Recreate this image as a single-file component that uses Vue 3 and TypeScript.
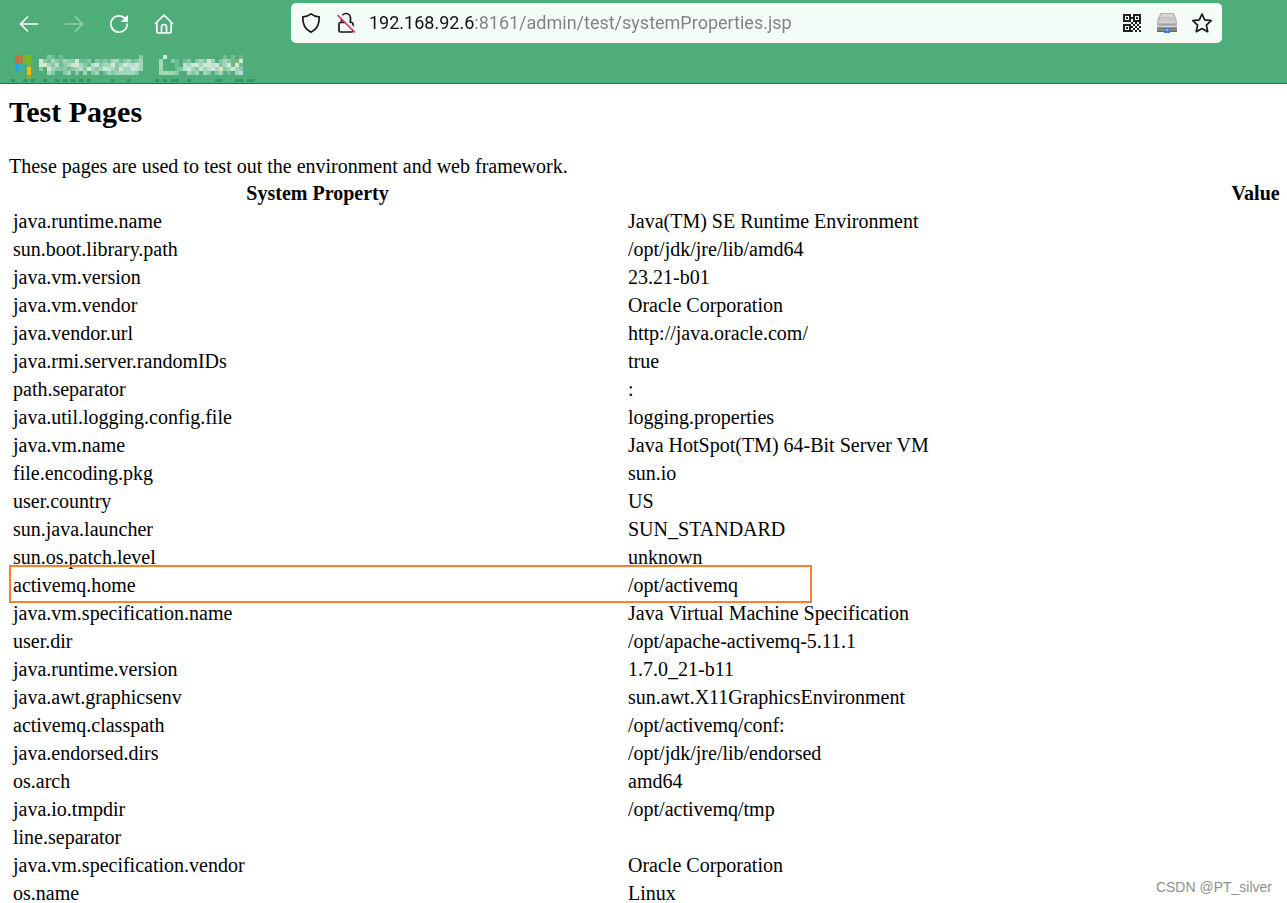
<script setup lang="ts">
interface Property {
  name: string
  value: string
  marked?: boolean
}

interface Cell {
  x: number
  y: number
  fill: string
}

const address = '192.168.92.6:8161/admin/test/systemProperties.jsp'

const properties: Property[] = [
  { name: 'java.runtime.name', value: 'Java(TM) SE Runtime Environment' },
  { name: 'sun.boot.library.path', value: '/opt/jdk/jre/lib/amd64' },
  { name: 'java.vm.version', value: '23.21-b01' },
  { name: 'java.vm.vendor', value: 'Oracle Corporation' },
  { name: 'java.vendor.url', value: 'http://java.oracle.com/' },
  { name: 'java.rmi.server.randomIDs', value: 'true' },
  { name: 'path.separator', value: ':' },
  { name: 'java.util.logging.config.file', value: 'logging.properties' },
  { name: 'java.vm.name', value: 'Java HotSpot(TM) 64-Bit Server VM' },
  { name: 'file.encoding.pkg', value: 'sun.io' },
  { name: 'user.country', value: 'US' },
  { name: 'sun.java.launcher', value: 'SUN_STANDARD' },
  { name: 'sun.os.patch.level', value: 'unknown' },
  { name: 'activemq.home', value: '/opt/activemq', marked: true },
  { name: 'java.vm.specification.name', value: 'Java Virtual Machine Specification' },
  { name: 'user.dir', value: '/opt/apache-activemq-5.11.1' },
  { name: 'java.runtime.version', value: '1.7.0_21-b11' },
  { name: 'java.awt.graphicsenv', value: 'sun.awt.X11GraphicsEnvironment' },
  { name: 'activemq.classpath', value: '/opt/activemq/conf:' },
  { name: 'java.endorsed.dirs', value: '/opt/jdk/jre/lib/endorsed' },
  { name: 'os.arch', value: 'amd64' },
  { name: 'java.io.tmpdir', value: '/opt/activemq/tmp' },
  { name: 'line.separator', value: '' },
  { name: 'java.vm.specification.vendor', value: 'Oracle Corporation' },
  { name: 'os.name', value: 'Linux' },
]

const palette: Record<string, string> = {
  r: '#cc6a3c', n: '#9a8547', g: '#7cb913', h: '#70b33f', u: '#1ba8dc', t: '#4aac9a',
  y: '#f4bd0c', o: '#7bae4c', a: '#6fbd92', b: '#a3d6b9', c: '#cfe9d8', d: '#b4e0dd',
  e: '#88c8a4', f: '#74b87d', s: '#dce6c4', k: '#339963',
}

function toCells(rows: string[], column: number): Cell[] {
  return rows.flatMap((row, y) =>
    [...row].flatMap((key, x) =>
      key === '.' ? [] : [{ x: (x + column) * 4, y: y * 4, fill: palette[key] }],
    ),
  )
}

const logo = toCells(['rngg', 'rnhg', 'ut.o', 'ut.y', '...y', '...o'], 1)
const firstLabel = toCells(
  [
    '..ea.a...................e',
    'ceabeabeecaae.eaeabbaebaeb',
    'csbedaebcsbeadcebbcebcddcb',
    'e.cbeeeaebdecbebcdbecbbcdb',
    '..be..eb.e.b.eb.abebbbbbe.',
  ],
  7,
)
const secondLabel = toCells(
  [
    '.c..............a.a.f.',
    'b..ea.ae.ebecb.ebeffc.',
    'b...a.dbccbcsdcebcfca.',
    'b...aedcbecbdcbsebcbe.',
    'bbbbe..beb.be.eb.a.bd.',
  ],
  37,
)
const edge = [0, 3, 5, 8, 11, 13, 15, 17, 19, 25, 29, 36, 38, 40, 41, 44, 51, 52, 56, 57, 59, 60].map(
  (x) => ({ x: x * 4, y: 24, fill: palette.k }),
)
const mosaic: Cell[] = [...logo, ...firstLabel, ...secondLabel, ...edge]
</script>

<template>
  <div class="window">
    <header class="chrome">
      <div class="toolbar">
        <nav class="navigation">
          <button type="button" aria-label="Back">
            <svg width="20" height="20" viewBox="0 0 20 20">
              <path d="M18.500 10H1.500M8.500 3 1.500 10l7 7" />
            </svg>
          </button>
          <button type="button" aria-label="Forward" disabled>
            <svg width="20" height="20" viewBox="0 0 20 20">
              <path d="M1.500 10h17M11.500 3l7 7-7 7" />
            </svg>
          </button>
          <button type="button" aria-label="Reload">
            <svg width="20" height="20" viewBox="0 0 20 20">
              <path d="M16.500 5A8.200 8.200 0 1 0 18.200 10" />
              <path class="solid" d="M18.500 2v5.500h-5.500z" />
            </svg>
          </button>
          <button type="button" aria-label="Home">
            <svg width="20" height="20" viewBox="0 0 20 20">
              <path d="M1.500 9.500 10 1l8.500 8.500M2.800 8.500v9q0 1.500 1.500 1.500h11.400q1.500 0 1.500-1.500v-9M7.500 18.500V13a2.500 2.500 0 0 1 5 0v5.500" />
            </svg>
          </button>
        </nav>
        <div class="address">
          <button type="button" aria-label="Tracking protection">
            <svg width="20" height="22" viewBox="0 0 20 22">
              <path d="M10 1.800C7.500 3.800 5 4.600 1.800 4.800 1.500 12 4 17.500 10 20.200 16 17.500 18.500 12 18.200 4.800 15 4.600 12.500 3.800 10 1.800Z" />
            </svg>
          </button>
          <button type="button" aria-label="Connection is not secure">
            <svg width="20" height="22" viewBox="0 0 20 22">
              <path d="M5.500 10.500V6a4.500 4.500 0 0 1 9 0v4.500M4.500 10.500h11q1.500 0 1.500 1.500v6.500q0 1.500-1.500 1.500h-11Q3 20 3 18.500V12q0-1.500 1.500-1.500Z" />
              <path class="halo" d="M3.500 2.500 19.500 18.500" />
              <path class="slash" d="M2 3.500 18.500 20" />
            </svg>
          </button>
          <input class="url" type="text" aria-label="Address" :value="address" spellcheck="false" />
          <button type="button" aria-label="QR code">
            <svg class="qr" width="18" height="18" viewBox="0 0 18 18" shape-rendering="crispEdges">
              <path d="M0 0h8v8H0zM2 2v4h4V2zM10 0h8v8h-8zM12 2v4h4V2zM0 10h8v8H0zM2 12v4h4v-4z" />
              <path d="M3 3h2v2H3zM13 3h2v2h-2zM3 13h2v2H3zM8 3h2v2H8zM8 8h2v2H8zM12 8h2v2h-2zM16 8h2v2h-2zM10 10h2v2h-2zM14 10h2v2h-2zM8 12h2v2H8zM12 12h2v2h-2zM16 12h2v2h-2zM10 14h2v2h-2zM14 14h2v2h-2zM8 16h2v2H8zM12 16h2v2h-2zM16 16h2v2h-2z" />
            </svg>
          </button>
          <button type="button" aria-label="Proxy">
            <svg class="drive" width="20" height="20" viewBox="0 0 20 20">
              <path fill="#b5b5b5" d="M4 0h12q1 0 1.300 1L20 8v4.500q0 1-1 1H1q-1 0-1-1V8l2.700-7Q3 0 4 0z" />
              <path fill="#d6d6d6" d="M4.500 1h11L18 7.500H2z" />
              <path fill="#c4c4c4" d="M4 4h12l1 2.500H3z" />
              <path fill="#ececec" d="M1 8.500h18v1H1z" />
              <path fill="#a2a2a2" d="M2 11h16v1H2z" />
              <path fill="#85888a" d="M0 14.500h20V19H0z" />
              <path fill="#66696b" d="M0 14.500h20v1H0zM0 18h20v1H0z" />
              <path fill="#3978e8" d="M8 15h4v3l1 1v1H7v-1l1-1z" />
              <path fill="#8bb4ff" d="M9 16h2v2H9z" />
            </svg>
          </button>
          <button type="button" aria-label="Bookmark this page">
            <svg width="22" height="22" viewBox="0 0 22 22">
              <path d="M11 2 13.700 7.900 20.200 8.700 15.400 13.100 16.700 19.700 11 16.500 5.300 19.700 6.600 13.100 1.800 8.700 8.300 7.900Z" />
            </svg>
          </button>
        </div>
      </div>
      <svg class="bookmarks" width="244" height="28" viewBox="0 0 244 28" shape-rendering="crispEdges" aria-hidden="true">
        <rect
          v-for="(cell, i) in mosaic"
          :key="i"
          :x="cell.x"
          :y="cell.y"
          width="4"
          :height="cell.y === 24 ? 3 : 4"
          :fill="cell.fill"
        />
      </svg>
    </header>

    <main class="page">
      <h2>Test Pages</h2>
      <p>These pages are used to test out the environment and web framework.</p>
      <table>
        <thead>
          <tr>
            <th class="name" scope="col">System Property</th>
            <th scope="col">Value</th>
          </tr>
        </thead>
        <tbody>
          <tr v-for="property in properties" :key="property.name" :class="{ marked: property.marked }">
            <td>{{ property.name }}</td>
            <td>{{ property.value }}</td>
          </tr>
        </tbody>
      </table>
    </main>
    <div class="watermark">CSDN @PT_silver</div>
  </div>
</template>

<style>
body {
  margin: 0;
  background: #fff;
}
</style>

<style scoped>
.window {
  position: relative;
  display: flex;
  flex-direction: column;
  height: 100vh;
  overflow: hidden;
}

.chrome {
  flex: none;
  background: #4fad79;
  border-bottom: 1px solid #128045;
}

.toolbar {
  display: flex;
  align-items: flex-start;
  padding: 3px 65px 0 6px;
}

.navigation {
  display: flex;
  flex: none;
  width: 285px;
  padding-top: 1px;
}

button {
  display: flex;
  align-items: center;
  justify-content: center;
  flex: none;
  height: 40px;
  margin: 0;
  padding: 0;
  border: 0;
  background: none;
}

.navigation button {
  width: 45px;
  color: #fff;
}

.navigation button:disabled {
  opacity: 0.4;
}

svg {
  display: block;
}

button path {
  fill: none;
  stroke: currentColor;
  stroke-width: 1.7;
  stroke-linecap: round;
  stroke-linejoin: round;
}

.navigation .solid {
  fill: currentColor;
  stroke-width: 1;
}

.address {
  display: flex;
  align-items: center;
  flex: 1;
  min-width: 0;
  height: 40px;
  padding: 0 3px 0 2px;
  box-sizing: border-box;
  border-radius: 5px;
  background: #f3fcf7;
}

.address button {
  width: 35px;
  color: #161a18;
}

.address .halo {
  stroke: #f3fcf7;
  stroke-width: 3;
}

.address .slash {
  stroke: #e8315b;
}

.address .qr path {
  fill: #222;
  fill-rule: evenodd;
  stroke: none;
}

.address .drive path {
  fill: revert-layer;
  stroke: none;
}

.url {
  flex: 1;
  min-width: 0;
  height: 32px;
  margin: 0 0 0 6px;
  padding: 0;
  border: 0;
  outline: 0;
  font: 18px/32px Roboto, "Open Sans", sans-serif;
  background: linear-gradient(90deg, #111 105px, #7c837f 105px);
  background-clip: text;
  -webkit-background-clip: text;
  -webkit-text-fill-color: transparent;
}

.bookmarks {
  margin: 11px 0 0 11px;
}

.page {
  flex: 1;
  min-height: 0;
  overflow: hidden;
  padding: 0 9px;
  font: 20px/24px "Liberation Serif", "Times New Roman", serif;
  color: #000;
}

h2 {
  margin: 11px 0 25px;
  font-size: 30px;
  line-height: 34px;
}

p {
  margin: 0;
}

table {
  width: 148%;
  table-layout: fixed;
  border-collapse: separate;
  border-spacing: 2px;
}

th,
td {
  height: 24px;
  padding: 1px;
}

td {
  padding-left: 2px;
  text-align: left;
}

.name {
  width: 611px;
}

.marked {
  position: relative;
}

.marked td:first-child::after {
  content: "";
  position: absolute;
  top: -7px;
  left: -2px;
  width: 803px;
  height: 38px;
  box-sizing: border-box;
  border: 2px solid #fb8030;
}

.watermark {
  position: absolute;
  right: 15px;
  bottom: 6px;
  font: 14px/20px "Liberation Sans", Arial, sans-serif;
  color: #8f8f8f;
}
</style>
